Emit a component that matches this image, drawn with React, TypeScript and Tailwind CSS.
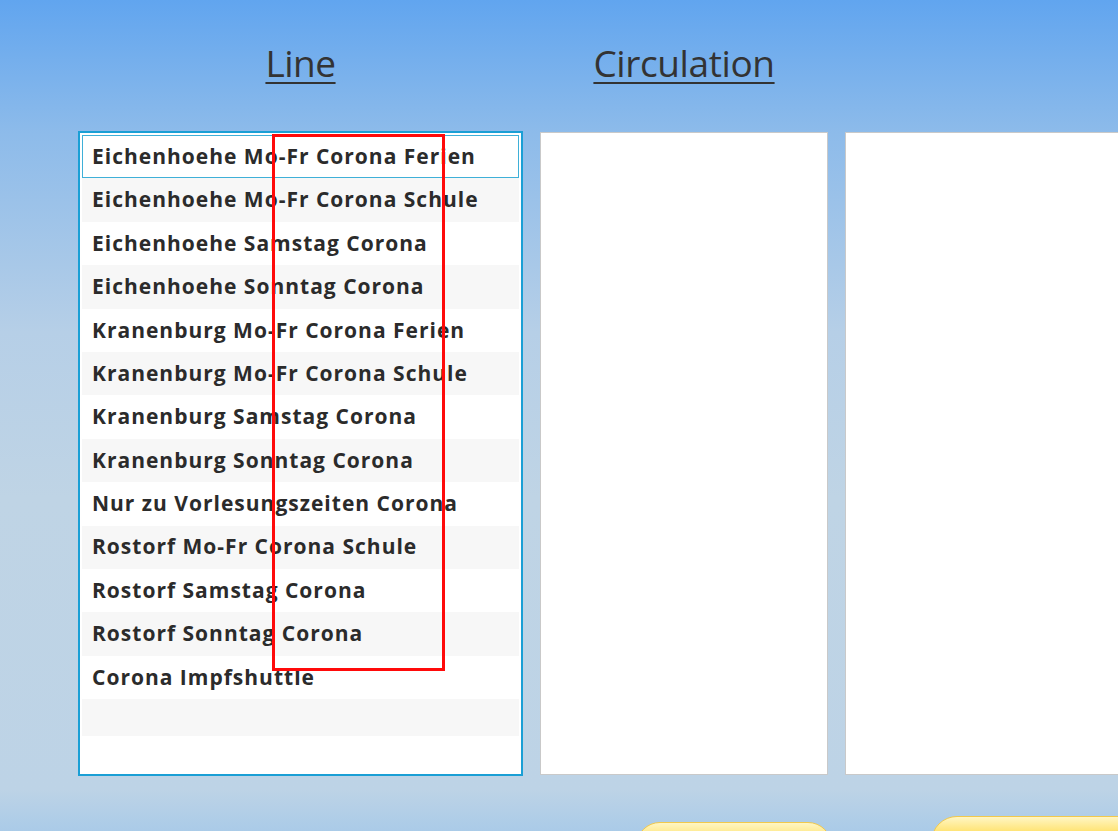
import React from 'react'

const lines = [
  'Eichenhoehe Mo-Fr Corona Ferien',
  'Eichenhoehe Mo-Fr Corona Schule',
  'Eichenhoehe Samstag Corona',
  'Eichenhoehe Sonntag Corona',
  'Kranenburg Mo-Fr Corona Ferien',
  'Kranenburg Mo-Fr Corona Schule',
  'Kranenburg Samstag Corona',
  'Kranenburg Sonntag Corona',
  'Nur zu Vorlesungszeiten Corona',
  'Rostorf Mo-Fr Corona Schule',
  'Rostorf Samstag Corona',
  'Rostorf Sonntag Corona',
  'Corona Impfshuttle',
]

export default function App() {
  return (
    <div
      className="relative h-[831px] w-[1118px] overflow-hidden bg-[linear-gradient(180deg,#61a5ef_0%,#8dbbea_16%,#b6cfe7_40%,#bfd4e5_60%,#bdd3e6_95%,#aacbe8_100%)]"
      style={{ fontFamily: '"Open Sans", "Noto Sans", sans-serif' }}
    >
      {/* headers */}
      <div className="flex h-[131px] items-start pt-[39px]">
        <div className="ml-[78px] flex w-[445px] justify-center">
          <span className="text-[37px] leading-[48px] tracking-[-0.5px] text-[#333] underline decoration-2 underline-offset-[5px]">
            Line
          </span>
        </div>
        <div className="ml-[17px] flex w-[288px] justify-center">
          <span className="text-[37px] leading-[48px] tracking-[-0.4px] text-[#333] underline decoration-2 underline-offset-[5px]">
            Circulation
          </span>
        </div>
      </div>

      {/* panels */}
      <div className="flex gap-[17px] pl-[78px]">
        <div className="h-[645px] w-[445px] border-2 border-[#1a9fd5] bg-white p-[2px]">
          {lines.map((line, i) => (
            <div
              key={line}
              className={`flex h-[43.4px] items-center whitespace-nowrap text-[21px] font-bold tracking-[1px] text-[#2b2b2b] ${
                i === 0 ? 'border border-[#3fb0d8] pl-[9px]' : i % 2 === 1 ? 'bg-[#f7f7f7] pl-[10px]' : 'bg-white pl-[10px]'
              }`}
            >
              {line}
            </div>
          ))}
          <div className="h-[37px] bg-[#f7f7f7]" />
        </div>
        <div className="mt-[1px] h-[643px] w-[288px] border border-[#c9c9c9] bg-white" />
        <div className="mt-[1px] h-[643px] flex-1 border border-[#c9c9c9] border-r-0 bg-white" />
      </div>

      {/* bottom buttons (cut off) */}
      <div className="absolute left-[636px] top-[822px] h-[40px] w-[196px] rounded-t-[24px] border border-[#f2c94c] bg-[linear-gradient(180deg,#fff6c4_0%,#ffe066_45%,#fdd540_100%)]" />
      <div className="absolute left-[931px] top-[816px] h-[40px] w-[220px] rounded-tl-[26px] border border-[#f2c94c] bg-[linear-gradient(180deg,#fff6c4_0%,#ffe066_45%,#fdd540_100%)]" />

      {/* red highlight overlay */}
      <div className="absolute left-[272px] top-[134px] h-[537px] w-[173px] border-[3px] border-[#ff0a0a]" />
    </div>
  )
}
